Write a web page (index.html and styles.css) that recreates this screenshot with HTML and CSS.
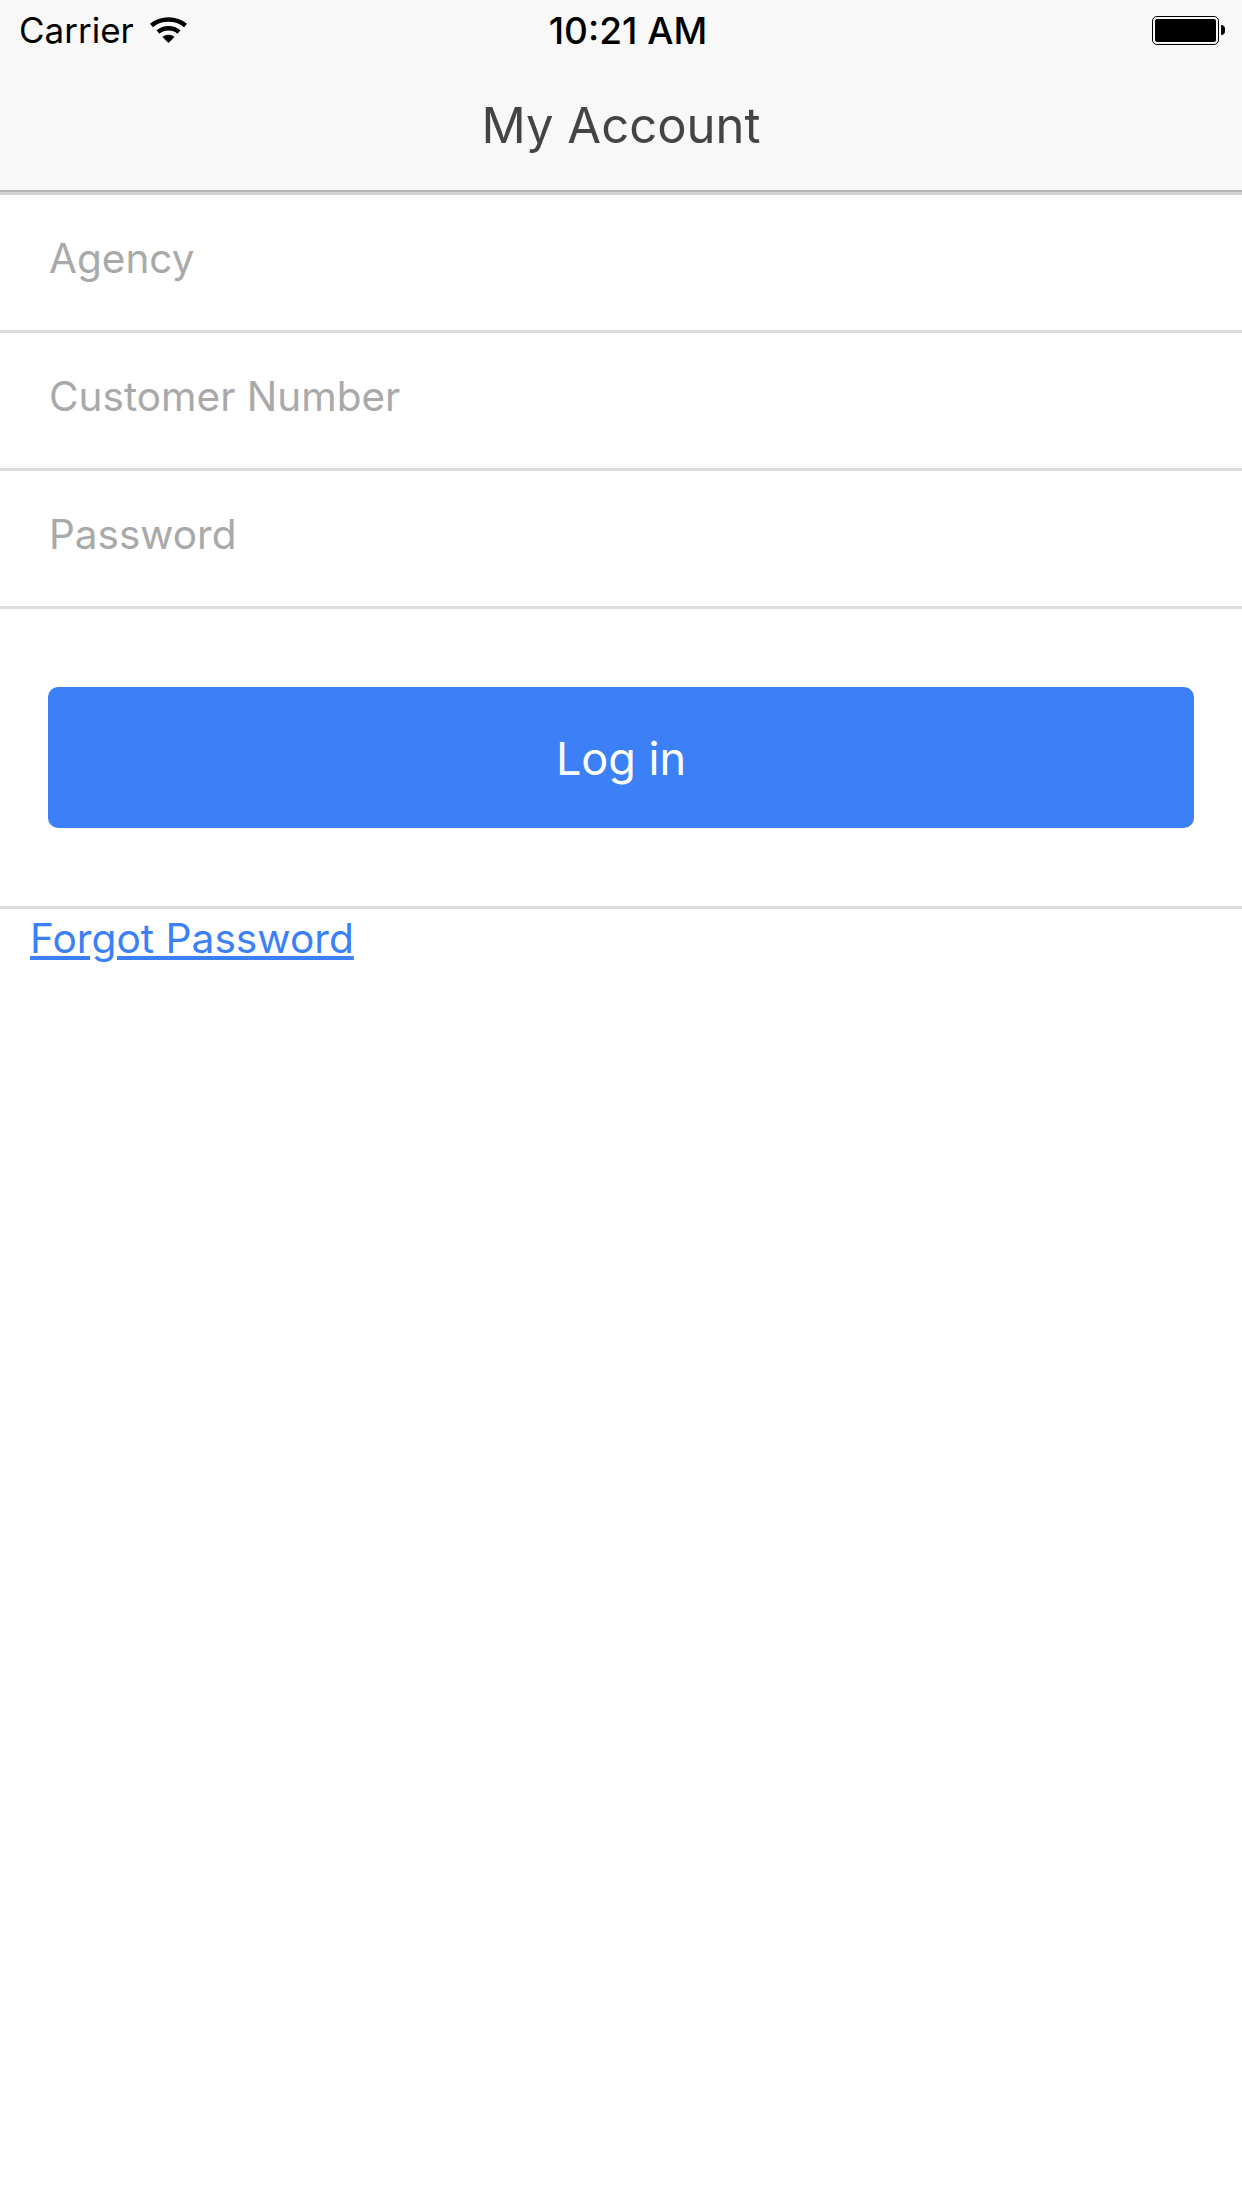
FILE: index.html
```html
<!DOCTYPE html>
<html lang="en">
<head>
    <meta charset="UTF-8">
    <meta name="viewport" content="width=device-width, initial-scale=1.0">
    <title>My Account</title>
    <link rel="stylesheet" href="styles.css">
</head>
<body>
    <header class="app-header">
        <div class="status-bar">
            <div class="status-left">
                <span class="carrier">Carrier</span>
                <svg class="wifi" width="37" height="26" viewBox="0 0 37 26">
                    <path d="M1.5 8.5 C11 0.5 26 0.5 35.5 8.5" fill="none" stroke="#000" stroke-width="4.5"/>
                    <path d="M8 15 C14 10 23 10 29 15" fill="none" stroke="#000" stroke-width="4.5"/>
                    <path d="M12.5 20 C16 17 21 17 24.5 20 L18.5 26 Z" fill="#000"/>
                </svg>
            </div>
            <span class="clock">10:21 AM</span>
            <div class="battery">
                <div class="battery-body"><div class="battery-fill"></div></div>
                <div class="battery-tip"></div>
            </div>
        </div>
        <h1 class="page-title">My Account</h1>
    </header>
    <main>
        <form class="login-form">
            <div class="field">Agency</div>
            <div class="field">Customer Number</div>
            <div class="field">Password</div>
            <div class="button-row">
                <button type="button" class="login-button">Log in</button>
            </div>
        </form>
        <a class="forgot-link" href="#forgot">Forgot Password</a>
    </main>
</body>
</html>
```

FILE: styles.css
```css
body {
	font-family: Inter, "Noto Sans", sans-serif;
	margin: 0;
	padding: 0;
	background-color: #fff;
}

.app-header {
	height: 190px;
	background: #f8f8f8;
	border-bottom: 2px solid #b4b4b4;
	box-shadow: 0 3px 0 #d4d4d4;
}

.status-bar {
	display: flex;
	align-items: center;
	justify-content: space-between;
	height: 60px;
	padding: 0 17px 0 19px;
}

.status-left {
	display: flex;
	align-items: center;
	gap: 16px;
	width: 332px;
}

.carrier {
	font-size: 35px;
	color: #000;
}

.wifi {
	display: block;
}

.clock {
	font-size: 37px;
	font-weight: 500;
	color: #000;
}

.battery {
	display: flex;
	align-items: center;
	justify-content: flex-end;
	gap: 2px;
	width: 320px;
}

.battery-body {
	box-sizing: border-box;
	width: 67px;
	height: 29px;
	padding: 2px;
	border: 1px solid #000;
	border-radius: 5px;
}

.battery-fill {
	height: 100%;
	background: #000;
	border-radius: 2px;
}

.battery-tip {
	width: 4px;
	height: 10px;
	background: #000;
	border-radius: 0 5px 5px 0;
}

.page-title {
	margin: 0;
	padding-top: 36px;
	font-size: 49px;
	font-weight: 400;
	line-height: 60px;
	text-align: center;
	color: #444;
}

.login-form {
	padding-top: 3px;
}

.field {
	box-sizing: border-box;
	height: 138px;
	padding: 0 49px 8px;
	display: flex;
	align-items: center;
	font-size: 40.5px;
	color: #a9a9a9;
	border-bottom: 3px solid #dcdcdc;
}

.button-row {
	padding: 78px 48px;
	border-bottom: 3px solid #dcdcdc;
}

.login-button {
	display: block;
	width: 100%;
	height: 141px;
	padding: 2px 0 0;
	border: none;
	border-radius: 10px;
	background: #3b80f6;
	color: #fff;
	font-family: inherit;
	font-size: 45px;
}

.forgot-link {
	display: inline-block;
	margin-left: 30px;
	font-size: 40.7px;
	line-height: 60px;
	color: #3b80f6;
}
```
